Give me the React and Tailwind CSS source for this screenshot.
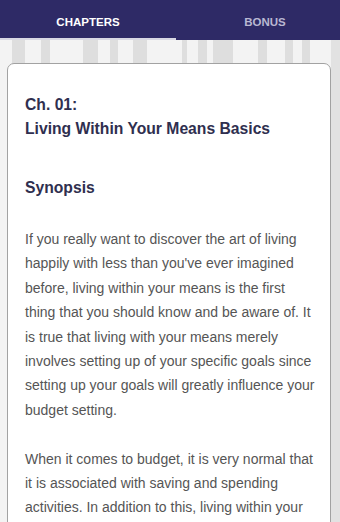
import React from "react";

function App() {
  return (
    <div
      className="w-[340px] h-[522px] overflow-hidden bg-[#f3f3f3] bg-[linear-gradient(90deg,#f3f3f3_12px,#dedede_12px,#dedede_25px,#f3f3f3_25px,#f3f3f3_41px,#dedede_41px,#dedede_50px,#f3f3f3_50px,#f3f3f3_83px,#dedede_83px,#dedede_98px,#f3f3f3_98px,#f3f3f3_110px,#dedede_110px,#dedede_118px,#f3f3f3_118px,#f3f3f3_133px,#dedede_133px,#dedede_147px,#f3f3f3_147px,#f3f3f3_182px,#dedede_182px,#dedede_187px,#f3f3f3_187px,#f3f3f3_198px,#dedede_198px,#dedede_207px,#f3f3f3_207px,#f3f3f3_213px,#dedede_213px,#dedede_233px,#f3f3f3_233px,#f3f3f3_258px,#dedede_258px,#dedede_267px,#f3f3f3_267px,#f3f3f3_285px,#dedede_285px,#dedede_293px,#f3f3f3_293px,#f3f3f3_302px,#dedede_302px,#dedede_310px,#f3f3f3_310px,#f3f3f3_331px,#e2e2e2_331px)]"
      style={{ fontFamily: '"Liberation Sans", Arial, sans-serif' }}
    >
      {/* tabs */}
      <div className="flex h-[40px] bg-[#2e2a66]">
        <div className="flex w-[176px] flex-col">
          <div className="flex flex-1 items-center justify-center pt-[8px] text-[11.5px] font-bold text-white">
            CHAPTERS
          </div>
          <div className="h-[2px] bg-[#d8d8e4]"></div>
        </div>
        <div className="flex flex-1 items-center justify-center pl-[14px] pt-[6px] text-[11.5px] font-bold text-[#b9b8d2]">
          BONUS
        </div>
      </div>

      {/* chapter card */}
      <div className="pl-[7px] pr-[9px] pt-[23px]">
        <div className="h-[600px] rounded-[7px] border border-[#a2a2a2] bg-white pl-[17px] pr-[12px] pt-[29px]">
          <h2 className="text-[15.7px] font-bold leading-[24px] text-[#2f2f4f]">
            Ch. 01:
            <br />
            Living Within Your Means Basics
          </h2>
          <h3 className="mt-[35px] text-[15.7px] font-bold leading-[24px] text-[#2f2f4f]">
            Synopsis
          </h3>
          <div className="mt-[27px] space-y-[24.4px] text-[14px] leading-[24.4px] text-[#555555]">
            <p>
              If you really want to discover the art of living happily with
              less than you've ever imagined before, living within your means
              is the first thing that you should know and be aware of. It is
              true that living with your means merely involves setting up of
              your specific goals since setting up your goals will greatly
              influence your budget setting.
            </p>
            <p>
              When it comes to budget, it is very normal that it is associated
              with saving and spending activities. In addition to this, living
              within your means also involves planning on how you use your
              money wisely.
            </p>
          </div>
        </div>
      </div>
    </div>
  );
}

export default App;
